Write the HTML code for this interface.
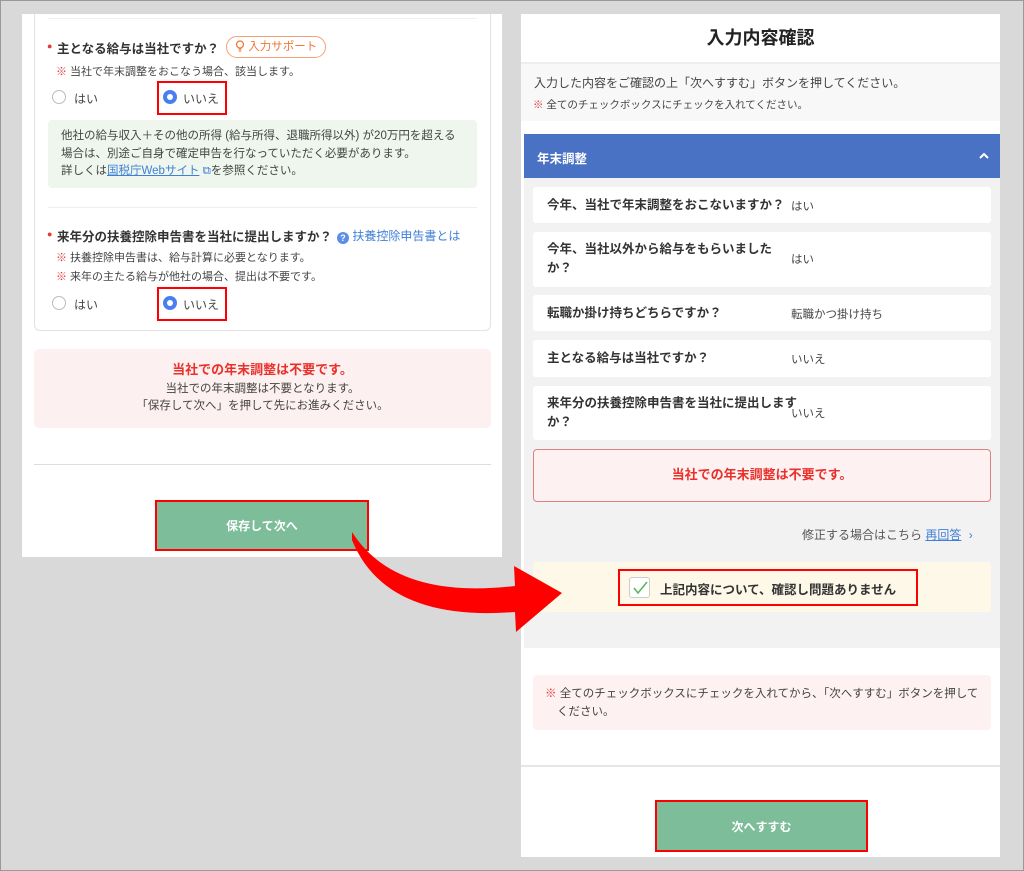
<!DOCTYPE html>
<html><head><meta charset="utf-8"><style>
*{margin:0;padding:0;box-sizing:border-box}
body{width:1024px;height:871px;background:#d9d9d9;position:relative;overflow:hidden;font-family:"Liberation Sans","Noto Sans CJK JP",sans-serif;color:#333}
.a{position:absolute}
.w{white-space:nowrap}
.q{font-size:12.5px;font-weight:bold;color:#333}
.n{font-size:11px;color:#444}
.r{color:#e53935}
.radio{width:14px;height:14px;border-radius:50%;border:1px solid #bbb;background:#fff;display:inline-block}
.radio.on{border:none;background:#4a7ef0;position:relative}
.radio.on::after{content:"";position:absolute;left:4px;top:4px;width:6px;height:6px;border-radius:50%;background:#fff}
.red{border:2px solid #f00}
.row{position:absolute;left:533px;width:458px;background:#fff;border-radius:3px}
.row .k{position:absolute;left:14px;font-size:12.5px;font-weight:bold;line-height:19px;color:#333;width:240px}
.row .v{position:absolute;left:258px;font-size:11.5px;color:#444}
.btn{background:#7dbd99;color:#fff;font-weight:bold;font-size:12px;display:flex;align-items:center;justify-content:center}
</style></head><body>
<div class="a" style="left:0;top:0;width:1024px;height:871px;border:1px solid #999;z-index:9;pointer-events:none"></div>
<!-- left panel -->
<div class="a" style="left:22px;top:14px;width:480px;height:543px;background:#fff"></div>
<div class="a" style="left:34px;top:14px;width:457px;height:317px;border:1px solid #e2e2e2;border-top:none;border-radius:0 0 6px 6px;background:#fff"></div>
<div class="a" style="left:48px;top:18px;width:429px;height:1px;background:#eee"></div>
<div class="a w" style="left:47px;top:36px"><span class="r" style="font-size:9px">●</span></div>
<div class="a q w" style="left:57px;top:38px">主となる給与は当社ですか？</div>
<div class="a w" style="left:226px;top:36px;width:100px;height:22px;border:1px solid #f4a078;border-radius:11px;color:#f07838;font-size:11.5px;line-height:20px;padding-left:8px">
<svg width="10" height="12" viewBox="0 0 10 12" style="vertical-align:-2px"><circle cx="5" cy="4.5" r="3.5" fill="none" stroke="#f07838" stroke-width="1.3"/><path d="M3.5 9h3M3.8 11h2.4" stroke="#f07838" stroke-width="1.2"/></svg> 入力サポート</div>
<div class="a n w" style="left:56px;top:63px"><span class="r">※</span> 当社で年末調整をおこなう場合、該当します。</div>
<div class="a" style="left:52px;top:90px"><span class="radio"></span></div>
<div class="a n w" style="left:74px;top:90px;font-size:12px">はい</div>
<div class="a red" style="left:157px;top:81px;width:70px;height:34px;background:#fff"></div>
<div class="a" style="left:163px;top:90px"><span class="radio on"></span></div>
<div class="a n w" style="left:183px;top:90px;font-size:12px">いいえ</div>
<div class="a" style="left:48px;top:120px;width:429px;height:68px;background:#eef6ee;border-radius:4px"></div>
<div class="a n" style="left:61px;top:128px;font-size:11.5px;line-height:17.5px;width:395px">他社の給与収入＋その他の所得 (給与所得、退職所得以外) が20万円を超える場合は、別途ご自身で確定申告を行なっていただく必要があります。<br>詳しくは<span style="color:#3f7fd6;text-decoration:underline">国税庁Webサイト</span> <span style="color:#3f7fd6">⧉</span>を参照ください。</div>
<div class="a" style="left:48px;top:207px;width:429px;height:1px;background:#eee"></div>
<div class="a w" style="left:47px;top:224px"><span class="r" style="font-size:9px">●</span></div>
<div class="a q w" style="left:57px;top:226px">来年分の扶養控除申告書を当社に提出しますか？</div>
<div class="a w" style="left:337px;top:227px;font-size:12px;color:#3f7fd6"><span style="display:inline-block;width:12px;height:12px;border-radius:50%;background:#5b8ee6;color:#fff;font-size:9px;text-align:center;line-height:12px;font-weight:bold;vertical-align:-1px">?</span> 扶養控除申告書とは</div>
<div class="a n w" style="left:56px;top:249px"><span class="r">※</span> 扶養控除申告書は、給与計算に必要となります。</div>
<div class="a n w" style="left:56px;top:268px"><span class="r">※</span> 来年の主たる給与が他社の場合、提出は不要です。</div>
<div class="a" style="left:52px;top:296px"><span class="radio"></span></div>
<div class="a n w" style="left:74px;top:296px;font-size:12px">はい</div>
<div class="a red" style="left:157px;top:287px;width:70px;height:34px;background:#fff"></div>
<div class="a" style="left:163px;top:296px"><span class="radio on"></span></div>
<div class="a n w" style="left:183px;top:296px;font-size:12px">いいえ</div>
<div class="a" style="left:34px;top:349px;width:457px;height:79px;background:#fdf0f0;border-radius:5px;text-align:center">
<div style="color:#e8312a;font-weight:bold;font-size:13px;margin-top:10px">当社での年末調整は不要です。</div>
<div style="font-size:11.5px;color:#444;line-height:17px;margin-top:3px">当社での年末調整は不要となります。<br>「保存して次へ」を押して先にお進みください。</div></div>
<div class="a" style="left:34px;top:464px;width:457px;height:1px;background:#ddd"></div>
<div class="a red" style="left:155px;top:500px;width:214px;height:51px;background:#7dbd99"></div>
<div class="a btn" style="left:157px;top:502px;width:210px;height:47px">保存して次へ</div>

<!-- right panel -->
<div class="a" style="left:521px;top:14px;width:479px;height:843px;background:#fff"></div>
<div class="a w" style="left:521px;top:24px;width:479px;text-align:center;font-size:18px;font-weight:bold;color:#222">入力内容確認</div>
<div class="a" style="left:521px;top:62px;width:479px;height:2px;background:#eee"></div>
<div class="a" style="left:521px;top:64px;width:479px;height:57px;background:#f8f8f8"></div>
<div class="a w" style="left:534px;top:74px;font-size:12px;color:#444">入力した内容をご確認の上「次へすすむ」ボタンを押してください。</div>
<div class="a n w" style="left:533px;top:97px;font-size:10.5px"><span class="r">※</span> 全てのチェックボックスにチェックを入れてください。</div>
<div class="a" style="left:524px;top:134px;width:476px;height:44px;background:#4a72c4"></div>
<div class="a w" style="left:537px;top:148px;color:#fff;font-weight:bold;font-size:12.5px">年末調整</div>
<svg class="a" style="left:978px;top:152px" width="12" height="8" viewBox="0 0 12 8"><path d="M2 6l4-4 4 4" fill="none" stroke="#fff" stroke-width="2"/></svg>
<div class="a" style="left:524px;top:178px;width:476px;height:470px;background:#f2f2f2"></div>
<div class="row" style="top:187px;height:36px"><div class="k" style="top:9px;width:260px">今年、当社で年末調整をおこないますか？</div><div class="v" style="top:11px">はい</div></div>
<div class="row" style="top:232px;height:55px"><div class="k" style="top:8px">今年、当社以外から給与をもらいましたか？</div><div class="v" style="top:19px">はい</div></div>
<div class="row" style="top:295px;height:36px"><div class="k" style="top:9px">転職か掛け持ちどちらですか？</div><div class="v" style="top:11px">転職かつ掛け持ち</div></div>
<div class="row" style="top:340px;height:37px"><div class="k" style="top:9px">主となる給与は当社ですか？</div><div class="v" style="top:11px">いいえ</div></div>
<div class="row" style="top:386px;height:54px"><div class="k" style="top:8px;width:250px">来年分の扶養控除申告書を当社に提出しますか？</div><div class="v" style="top:19px">いいえ</div></div>
<div class="a" style="left:533px;top:449px;width:458px;height:53px;background:#fdf1f1;border:1px solid #e08080;border-radius:4px;text-align:center;line-height:49px;color:#e8312a;font-weight:bold;font-size:13px">当社での年末調整は不要です。</div>
<div class="a w" style="left:802px;top:526px;font-size:12px;color:#555">修正する場合はこちら <span style="color:#3f7fd6;text-decoration:underline">再回答</span> <span style="color:#3f7fd6;margin-left:4px">›</span></div>
<div class="a" style="left:533px;top:562px;width:458px;height:50px;background:#fdf8e8;border-radius:3px"></div>
<div class="a red" style="left:618px;top:569px;width:300px;height:37px"></div>
<div class="a" style="left:629px;top:577px;width:21px;height:21px;border:1px solid #ccc;border-radius:3px;background:#fff"></div>
<svg class="a" style="left:631px;top:579px" width="18" height="18" viewBox="0 0 18 18"><path d="M3 9l4 5 9-11" fill="none" stroke="#5cb85c" stroke-width="1.6"/></svg>
<div class="a w" style="left:660px;top:579px;font-size:12.5px;font-weight:bold;color:#333">上記内容について、確認し問題ありません</div>
<div class="a" style="left:533px;top:675px;width:458px;height:55px;background:#fdf1f1;border-radius:4px"></div>
<div class="a n" style="left:545px;top:685px;width:440px;font-size:11.5px;line-height:18px;padding-left:12px;text-indent:-12px"><span class="r">※</span> 全てのチェックボックスにチェックを入れてから、「次へすすむ」ボタンを押してください。</div>
<div class="a" style="left:521px;top:765px;width:479px;height:2px;background:#e6e6e6"></div>
<div class="a red" style="left:655px;top:800px;width:213px;height:52px;background:#7dbd99"></div>
<div class="a btn" style="left:657px;top:802px;width:209px;height:48px">次へすすむ</div>

<svg class="a" style="left:0;top:0" width="1024" height="871"><path d="M352 532 Q395 600 515 586 L514 566 L562 593 L516 632 L515 612 Q385 622 352 540 Z" fill="#f00"/></svg>
</body></html>
